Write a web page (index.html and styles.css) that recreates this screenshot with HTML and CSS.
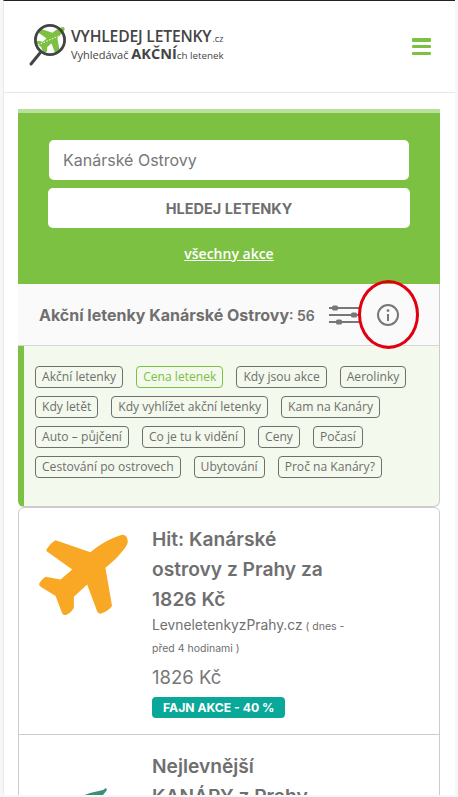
FILE: index.html
```html
<!DOCTYPE html>
<html lang="cs">
<head>
<meta charset="utf-8">
<title>Vyhledej letenky</title>
<link rel="stylesheet" href="styles.css">
</head>
<body>
<div class="page">
  <header class="header">
    <a class="logo">
      <svg class="logo-mark" viewBox="0 0 40 44" width="40" height="44" aria-hidden="true">
        <circle cx="22" cy="16" r="14.6" fill="#fff"/>
        <path transform="translate(-1.4 -5) scale(.108)" fill="#7cc142" d="M240 128C262 108 300 85 335 75C348 74 354 88 352 100C345 120 315 150 285 175L305 290C295 303 280 311 270 313C265 313 262 310 260 306L230 225L190 262L190 295C183 308 170 318 162 317C158 316 156 314 154 310L135 260L90 232C85 228 84 224 87 220C92 213 98 206 105 202L150 210L185 180L108 125C107 122 107 119 110 116C117 106 126 97 135 92Z"/>
        <path d="M10 21L33 11" stroke="#fff" stroke-width=".9" stroke-dasharray="1.6 1.4"/>
        <circle cx="22" cy="16" r="14.6" fill="none" stroke="#444" stroke-width="2.8"/>
        <path d="M12 29L3 40" stroke="#444" stroke-width="3" stroke-linecap="round"/>
      </svg>
      <div class="logo-text">
        <div class="logo-top">VYHLEDEJ LETENKY<small>.cz</small></div>
        <div class="logo-sub">Vyhledávač <b>AKČNÍ</b><span class="logo-tail">ch letenek</span></div>
      </div>
    </a>
    <button class="burger" aria-label="Menu"><span></span><span></span><span></span></button>
  </header>
  <main class="content">
    <section class="search">
      <div class="search-input">Kanárské Ostrovy</div>
      <div class="search-button">HLEDEJ LETENKY</div>
      <a class="all-deals">všechny akce</a>
    </section>
    <section class="title-bar">
      <h1>Akční letenky Kanárské Ostrovy<span>: 56</span></h1>
      <svg class="sliders" viewBox="0 0 30 20" width="30" height="20" aria-hidden="true">
        <g stroke="#777" stroke-width="2"><path d="M0 3h30M0 10h30M0 17h30"/></g>
        <g fill="#777"><rect x="3" y="0.5" width="6" height="5" rx="1.5"/><rect x="22" y="7.5" width="6" height="5" rx="1.5"/><rect x="7" y="14.5" width="6" height="5" rx="1.5"/></g>
      </svg>
      <div class="info-wrap">
        <svg class="info" viewBox="0 0 24 24" width="24" height="24" aria-hidden="true">
          <circle cx="12" cy="12" r="10" fill="none" stroke="#777" stroke-width="2"/>
          <circle cx="12" cy="7.6" r="1.4" fill="#777"/>
          <path d="M12 11v7" stroke="#777" stroke-width="2"/>
        </svg>
        <div class="ring"></div>
      </div>
    </section>
    <nav class="tags">
      <a>Akční letenky</a><a class="active">Cena letenek</a><a>Kdy jsou akce</a><a>Aerolinky</a>
      <a>Kdy letět</a><a>Kdy vyhlížet akční letenky</a><a>Kam na Kanáry</a>
      <a>Auto – půjčení</a><a>Co je tu k vidění</a><a>Ceny</a><a>Počasí</a>
      <a>Cestování po ostrovech</a><a>Ubytování</a><a>Proč na Kanáry?</a>
    </nav>
    <section class="deals">
      <article class="deal">
        <svg class="plane" viewBox="80 70 275 250" width="92" height="83" aria-hidden="true">
          <path fill="#f9a825" d="M240 128C262 108 300 85 335 75C348 74 354 88 352 100C345 120 315 150 285 175L305 290C295 303 280 311 270 313C265 313 262 310 260 306L230 225L190 262L190 295C183 308 170 318 162 317C158 316 156 314 154 310L135 260L90 232C85 228 84 224 87 220C92 213 98 206 105 202L150 210L185 180L108 125C107 122 107 119 110 116C117 106 126 97 135 92Z"/>
        </svg>
        <div class="deal-body">
          <h2>Hit: Kanárské ostrovy z Prahy za 1826 Kč</h2>
          <p class="source"><span class="site">LevneletenkyzPrahy.cz</span> <span class="when">( dnes - před 4 hodinami )</span></p>
          <p class="price">1826 Kč</p>
          <span class="badge">FAJN AKCE - 40 %</span>
        </div>
      </article>
      <article class="deal">
        <svg class="plane plane-low" viewBox="0 0 92 60" width="92" height="60" aria-hidden="true">
          <path fill="#3a8f7c" d="M53 6L66 3L69 1L70 3L66 8L44 18L36 40L30 42L31 24L14 32L8 28L26 18L42 10Z"/>
        </svg>
        <div class="deal-body">
          <h2>Nejlevnější KANÁRY z Prahy</h2>
        </div>
      </article>
    </section>
  </main>
</div>
</body>
</html>
```
FILE: styles.css
```css
* { box-sizing: border-box; }
html, body { margin: 0; height: 797px; overflow: hidden; background: #f7f7f7; }
body { font-family: "Inter", "Open Sans", sans-serif; color: #6f6f6f; }
.page {
  width: 452px; height: 795px; margin-left: 3px; background: #fff;
  border-top: 1px solid #222; border-left: 1px solid #e8e8e8; overflow: hidden;
}
.header {
  height: 92px; display: flex; align-items: center; justify-content: space-between;
  padding: 0 24px; border-bottom: 1px solid #e6e6e6;
}
.logo { display: flex; align-items: center; gap: 3px; margin-top: -2px; }
.logo-text { margin-top: -1px; }
.logo-top { font: 600 15.7px/17px "Open Sans", sans-serif; color: #444; letter-spacing: -.2px; white-space: nowrap; }
.logo-top small { font-size: 9px; font-weight: 400; margin-left: 1px; letter-spacing: 0; }
.logo-sub { height: 16px; font: 400 11px/16px "Open Sans", sans-serif; color: #444; white-space: nowrap; }
.logo-sub b { font-size: 14.5px; font-weight: 700; line-height: 14px; }
.logo-tail { font-size: 9.8px; }
.burger { width: 19px; height: 17px; padding: 0; border: 0; background: none; display: flex; flex-direction: column; justify-content: space-between; }
.burger span { display: block; height: 3.5px; border-radius: 1px; background: #7cc142; }
.content { padding: 16px 15px 0 14px; }
.search {
  height: 175px; background: #7cc142; border-top: 4px solid #b9e09a;
  padding: 27px 30px 0; display: flex; flex-direction: column; align-items: center;
}
.search-input {
  width: 360px; height: 40px; background: #fff; border-radius: 5px; padding-left: 14px;
  display: flex; align-items: center; font-size: 16px; color: #777; flex: none;
}
.search-button {
  width: 362px; height: 40px; margin-top: 8px; background: #fff; border-radius: 5px; flex: none;
  display: flex; align-items: center; justify-content: center; font-size: 14.5px; font-weight: 700; color: #6f6f6f;
}
.all-deals { margin-top: 16px; color: #fff; font: 600 14px/20px "Open Sans", sans-serif; text-decoration: underline; }
.title-bar {
  height: 62px; display: flex; align-items: center; background: #fafafa;
  border-right: 1px solid #ccc; border-bottom: 1px solid #d6d6d6; padding-left: 21px;
}
.title-bar h1 { margin: 0; font-size: 16px; font-weight: 700; color: #6f6f6f; white-space: nowrap; }
.title-bar h1 span { font-size: 14px; font-weight: 600; }
.sliders { margin-left: 14px; }
.info-wrap { position: relative; margin-left: 17px; width: 24px; height: 24px; }
.info { display: block; }
.ring { position: absolute; left: -18px; top: -23px; width: 61px; height: 69px; border: 3px solid #e2000f; border-radius: 50%; }
.tags {
  height: 161px; background: #f3f9ec; border-left: 6px solid #7cc142; border-right: 1px solid #ccc;
  border-bottom: 1px solid #ccc; border-radius: 0 0 6px 6px;
  padding: 20px 11px; display: flex; flex-wrap: wrap; gap: 8px 13px; align-content: flex-start;
}
.tags a {
  height: 22px; display: flex; align-items: center; padding: 0 6px;
  border: 1px solid #6f6f6f; border-radius: 4px; font: 400 12.1px/20px "Open Sans", sans-serif; color: #6f6f6f;
}
.tags a.active { color: #7cc142; border-color: #7cc142; }
.deals { border: 1px solid #ccc; border-radius: 6px 6px 0 0; }
.deal { display: flex; padding: 16px 0 16px 18px; gap: 23px; }
.deal + .deal { border-top: 1px solid #ccc; }
.plane { flex: none; margin-top: 9px; }
.plane-low { margin-top: 36px; }
.deal-body { width: 200px; }
.deal h2 { margin: 0; max-width: 178px; font-size: 19.2px; line-height: 30px; font-weight: 600; color: #6f6f6f; }
.source { margin: 0; font-size: 10.5px; line-height: 22px; }
.site { font-size: 13.8px; }
.when { font-size: 10.5px; }
.price { margin: 2px 0 0; font-size: 18.5px; line-height: 30px; color: #777; }
.badge { display: block; width: fit-content; margin-top: 5px; padding: 0 11px; background: #0aa899; color: #fff; border-radius: 4px; font-size: 12.2px; font-weight: 700; line-height: 21px; }
```
